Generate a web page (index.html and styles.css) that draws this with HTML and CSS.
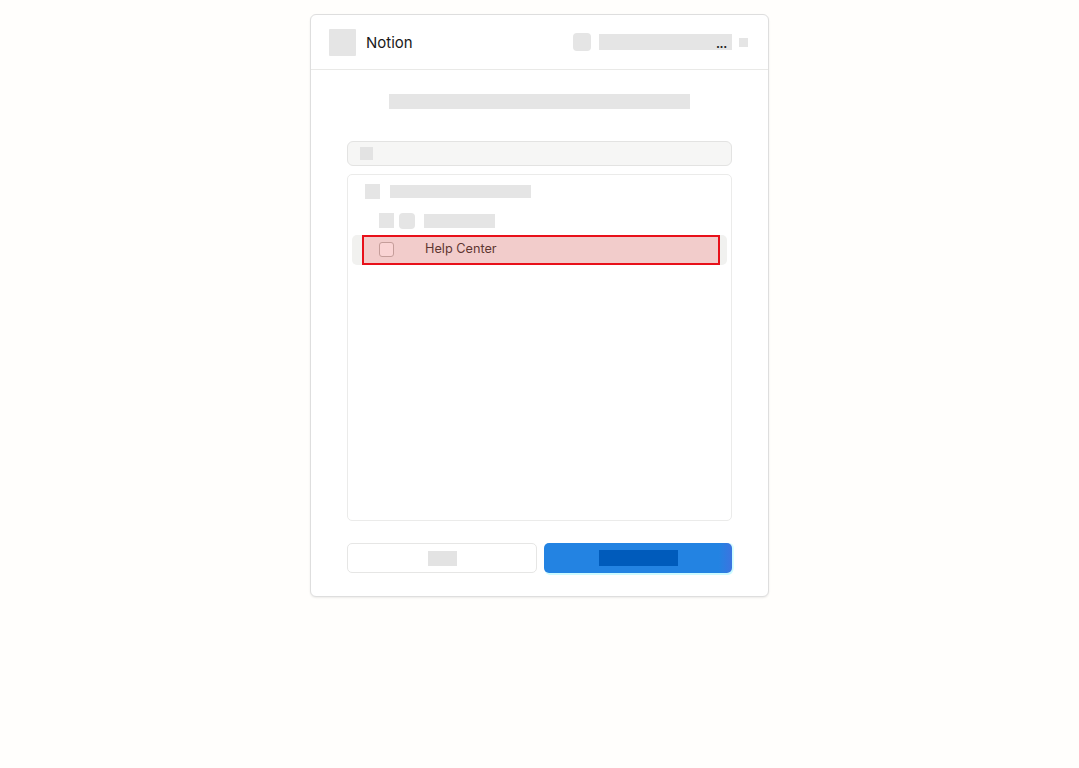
FILE: index.html
```html
<!DOCTYPE html>
<html lang="en">
<head>
<meta charset="utf-8">
<title>Notion</title>
<link rel="stylesheet" href="styles.css">
</head>
<body>
<div class="card">
  <div class="header">
    <div class="logo"></div>
    <div class="brand">Notion</div>
    <div class="header-right">
      <div class="avatar"></div>
      <div class="account"><span class="dots">...</span></div>
      <div class="caret"></div>
    </div>
  </div>
  <div class="body">
    <div class="title-bar"></div>
    <div class="search"><div class="search-icon"></div></div>
    <div class="list">
      <div class="row row-1">
        <div class="sq"></div>
        <div class="bar bar-long"></div>
      </div>
      <div class="row row-2">
        <div class="sq"></div>
        <div class="sq round"></div>
        <div class="bar bar-short"></div>
      </div>
      <div class="row row-3">
        <div class="check"></div>
        <div class="label">Help Center</div>
        <div class="mark"></div>
      </div>
    </div>
    <div class="actions">
      <div class="btn btn-cancel"><div class="btn-ph"></div></div>
      <div class="btn btn-primary"><div class="btn-ph"></div></div>
    </div>
  </div>
</div>
</body>
</html>
```
FILE: styles.css
```css
* { box-sizing: border-box; }
html, body { margin: 0; padding: 0; }
body {
  background: #fffefc;
  font-family: Inter, "Liberation Sans", Arial, sans-serif;
  color: #37352f;
  min-height: 768px;
}
.card {
  width: 459px;
  margin: 14px auto 0;
  background: #fff;
  border: 1px solid #dedede;
  border-radius: 6px;
  box-shadow: 0 1px 2px rgba(0,0,0,0.08);
}
.header {
  height: 55px;
  display: flex;
  align-items: center;
  padding: 0 20px 0 18px;
  border-bottom: 1px solid #e9e9e7;
}
.logo {
  width: 27px; height: 27px;
  background: #e5e5e5;
  border-radius: 1px;
}
.brand {
  margin-left: 10px;
  font-size: 15px;
  color: #191919;
}
.header-right {
  margin-left: auto;
  display: flex;
  align-items: center;
}
.avatar {
  width: 18px; height: 18px;
  background: #e5e5e5;
  border-radius: 4px;
}
.account {
  width: 133px; height: 16px;
  margin-left: 8px;
  background: #e5e5e5;
  position: relative;
}
.dots {
  position: absolute;
  right: 5px; bottom: 1px;
  font-size: 12px;
  font-weight: 700;
  line-height: 11px;
  color: #222;
  letter-spacing: -0.3px;
}
.caret {
  width: 9px; height: 9px;
  margin-left: 7px;
  background: #e5e5e5;
}
.body {
  padding: 24px 36px 23px;
}
.title-bar {
  width: 301px; height: 15px;
  margin: 0 auto;
  background: #e5e5e5;
}
.search {
  margin-top: 32px;
  height: 25px;
  background: #f6f6f5;
  border: 1px solid #e3e3e2;
  border-radius: 6px;
  display: flex;
  align-items: center;
  padding-left: 12px;
}
.search-icon {
  width: 13px; height: 13px;
  background: #e3e3e3;
}
.list {
  margin-top: 8px;
  height: 347px;
  border: 1px solid #ebebea;
  border-radius: 5px;
  padding-top: 2px;
}
.row {
  display: flex;
  align-items: center;
  position: relative;
}
.row-1 { height: 29px; padding-left: 17px; gap: 10px; }
.row-2 { height: 29px; padding-left: 31px; gap: 5px; }
.row-3 {
  height: 30px;
  margin: 0 4px;
  padding-left: 27px;
  background: #f1f1ef;
  border-radius: 5px;
}
.sq { width: 15px; height: 15px; background: #e5e5e5; }
.sq.round { width: 16px; height: 16px; border-radius: 4px; }
.bar { background: #e5e5e5; }
.bar-long { width: 141px; height: 13px; }
.bar-short { width: 71px; height: 14px; margin-left: 4px; }
.check {
  width: 15px; height: 15px;
  margin-top: -2px;
  border: 1px solid #b8b6b2;
  border-radius: 3px;
  background: #fafafa;
}
.label {
  margin-left: 31px;
  margin-top: -3px;
  font-size: 12.7px;
  color: #37352f;
}
.mark {
  position: absolute;
  left: 10px; right: 7px; top: 0; bottom: 0;
  border: 2px solid #e8101a;
  background: rgba(250, 60, 60, 0.2);
}
.actions {
  margin-top: 22px;
  display: flex;
  gap: 7px;
}
.btn {
  flex: 1;
  height: 30px;
  border-radius: 5px;
  display: flex;
  align-items: center;
  justify-content: center;
}
.btn-cancel {
  background: #fff;
  border: 1px solid #e6e6e5;
}
.btn-cancel .btn-ph { width: 29px; height: 15px; background: #e3e3e3; }
.btn-primary {
  background: linear-gradient(90deg, #2383e2 0%, #2383e2 93%, #3c74e0 100%);
  box-shadow: 1px 2px 0 #ccfbff, 2px 0 0 #d9feff;
}
.btn-primary .btn-ph { width: 79px; height: 16px; background: #005bbb; }
```
